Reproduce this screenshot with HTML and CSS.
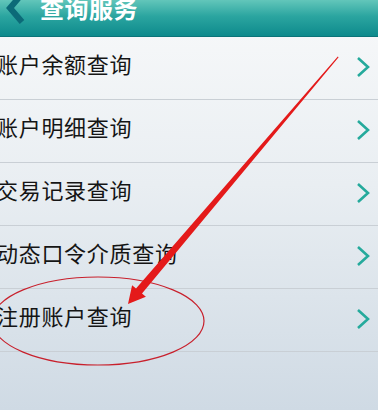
FILE: index.html
```html
<!DOCTYPE html>
<html lang="zh-CN">
<head>
    <meta charset="UTF-8">
    <title>查询服务</title>
    <link rel="stylesheet" href="styles.css">
</head>
<body>
    <div class="screen">
        <!-- Top bar -->
        <div class="topbar">
            <svg class="back" width="22" height="30" viewBox="0 0 22 30">
                <path d="M18 -2 L6 12 L18 26" fill="none" stroke="#0c6a78" stroke-width="6"/>
            </svg>
            <span class="title">查询服务</span>
        </div>

        <!-- Menu list -->
        <ul class="menu">
            <li class="item"><span>账户余额查询</span><svg class="chev" width="14" height="22" viewBox="0 0 14 22"><path d="M2 2 L12 11 L2 20" fill="none" stroke="#25aa9c" stroke-width="2.6"/></svg></li>
            <li class="item"><span>账户明细查询</span><svg class="chev" width="14" height="22" viewBox="0 0 14 22"><path d="M2 2 L12 11 L2 20" fill="none" stroke="#25aa9c" stroke-width="2.6"/></svg></li>
            <li class="item"><span>交易记录查询</span><svg class="chev" width="14" height="22" viewBox="0 0 14 22"><path d="M2 2 L12 11 L2 20" fill="none" stroke="#25aa9c" stroke-width="2.6"/></svg></li>
            <li class="item"><span>动态口令介质查询</span><svg class="chev" width="14" height="22" viewBox="0 0 14 22"><path d="M2 2 L12 11 L2 20" fill="none" stroke="#25aa9c" stroke-width="2.6"/></svg></li>
            <li class="item"><span>注册账户查询</span><svg class="chev" width="14" height="22" viewBox="0 0 14 22"><path d="M2 2 L12 11 L2 20" fill="none" stroke="#25aa9c" stroke-width="2.6"/></svg></li>
        </ul>

        <!-- annotation drawn over the screenshot -->
        <svg class="marks" width="378" height="410" viewBox="0 0 378 410">
            <ellipse cx="98" cy="321" rx="106" ry="44" fill="none" stroke="#c8202c" stroke-width="1.2"/>
            <polygon points="338.6,57.2 142,293.6 145.9,296.8 128,304 132.1,285.2 136,288.4 337.8,56.6" fill="#e41a1a"/>
        </svg>
    </div>
</body>
</html>
```

FILE: styles.css
```css
html, body { margin: 0; padding: 0; }
body { font-family: "Noto Sans CJK SC", "Noto Sans", sans-serif; }

.screen { position: relative; width: 378px; height: 410px; overflow: hidden; background: linear-gradient(to bottom, #f8f9fa 0%, #e9eef2 45%, #cfdae4 100%); }

.topbar { height: 37px; display: flex; align-items: flex-start; background: linear-gradient(to bottom, #62c6ba 0%, #2ba5a0 45%, #0d8a8c 100%); border-bottom: 1px solid #0b7479; box-sizing: border-box; overflow: hidden; }
.back { margin: -4px 0 0 4px; }
.title { color: #fff; font-size: 24px; font-weight: bold; line-height: 24px; margin: -4px 0 0 14px; letter-spacing: 0.5px; }

.menu { list-style: none; margin: 0; padding: 0; }
.item { height: 62px; display: flex; align-items: center; justify-content: space-between; border-bottom: 1px solid #c9cfd5; padding: 0 8px 0 0; margin-left: -4px; }
.item span { font-size: 22px; line-height: 30px; color: #151515; letter-spacing: 0.7px; margin-top: -10px; }
.chev { display: block; margin-top: -2px; }

.marks { position: absolute; left: 0; top: 0; }
```
